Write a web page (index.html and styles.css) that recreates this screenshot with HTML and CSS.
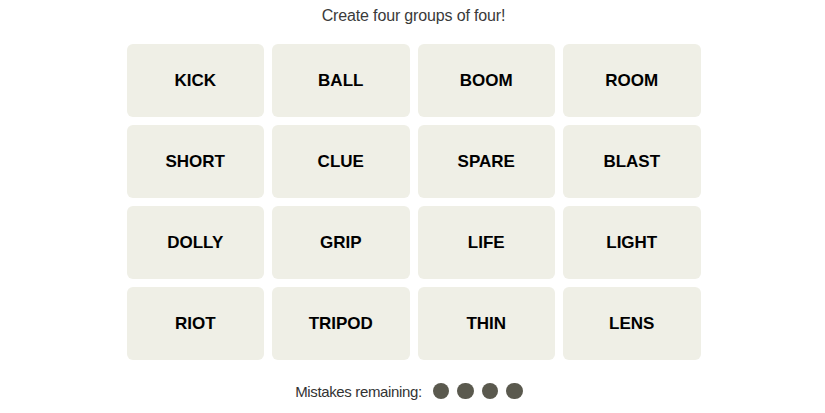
FILE: index.html
```html
<!DOCTYPE html>
<html>
<head>
<meta charset="utf-8">
<link rel="stylesheet" href="styles.css">
</head>
<body>
<main class="game">
  <p class="prompt">Create four groups of four!</p>
  <div class="board">
    <div class="tile">KICK</div>
    <div class="tile">BALL</div>
    <div class="tile">BOOM</div>
    <div class="tile">ROOM</div>
    <div class="tile">SHORT</div>
    <div class="tile">CLUE</div>
    <div class="tile">SPARE</div>
    <div class="tile">BLAST</div>
    <div class="tile">DOLLY</div>
    <div class="tile">GRIP</div>
    <div class="tile">LIFE</div>
    <div class="tile">LIGHT</div>
    <div class="tile">RIOT</div>
    <div class="tile">TRIPOD</div>
    <div class="tile">THIN</div>
    <div class="tile">LENS</div>
  </div>
  <div class="mistakes">
    <span class="label">Mistakes remaining:</span>
    <span class="dots"><span class="dot"></span><span class="dot"></span><span class="dot"></span><span class="dot"></span></span>
  </div>
</main>
</body>
</html>
```

FILE: styles.css
```css
html, body {
  margin: 0;
  padding: 0;
  background: #ffffff;
}
.game {
  width: 825px;
  display: flex;
  flex-direction: column;
  align-items: center;
  font-family: "Liberation Sans", Arial, sans-serif;
  color: #121212;
}
.prompt {
  margin: 5px 0 0 0;
  height: 22px;
  line-height: 22px;
  font-size: 16px;
  letter-spacing: -0.15px;
  color: #3a3a3a;
  padding-left: 2px;
}
.board {
  margin-top: 17px;
  margin-left: 2px;
  display: grid;
  grid-template-columns: repeat(4, 137.5px);
  grid-auto-rows: 73px;
  gap: 8px;
}
.tile {
  background: #efefe6;
  border-radius: 6px;
  display: flex;
  align-items: center;
  justify-content: center;
  font-weight: bold;
  font-size: 17px;
  color: #000000;
}
.mistakes {
  margin-top: 19px;
  margin-right: 7px;
  display: flex;
  align-items: center;
  gap: 11px;
  height: 24px;
}
.label {
  font-size: 15px;
  letter-spacing: -0.35px;
  color: #333333;
}
.dots {
  display: flex;
  gap: 8px;
}
.dot {
  width: 16.5px;
  height: 16.5px;
  border-radius: 50%;
  background: #5a594e;
}
```
